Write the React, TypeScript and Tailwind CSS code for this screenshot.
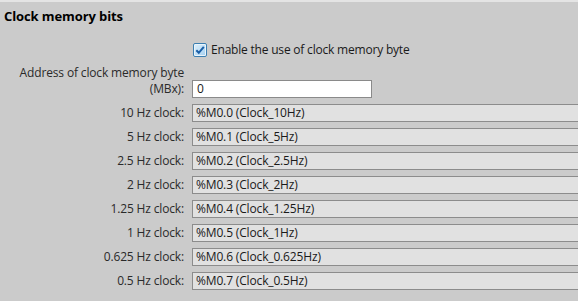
import React from "react";

const rows: [string, string][] = [
  ["10 Hz clock:", "%M0.0 (Clock_10Hz)"],
  ["5 Hz clock:", "%M0.1 (Clock_5Hz)"],
  ["2.5 Hz clock:", "%M0.2 (Clock_2.5Hz)"],
  ["2 Hz clock:", "%M0.3 (Clock_2Hz)"],
  ["1.25 Hz clock:", "%M0.4 (Clock_1.25Hz)"],
  ["1 Hz clock:", "%M0.5 (Clock_1Hz)"],
  ["0.625 Hz clock:", "%M0.6 (Clock_0.625Hz)"],
  ["0.5 Hz clock:", "%M0.7 (Clock_0.5Hz)"],
];

function CheckBox() {
  return (
    <svg width="14" height="14" viewBox="0 0 14 14" className="block">
      <defs>
        <linearGradient id="cbg" x1="0" y1="0" x2="1" y2="1">
          <stop offset="0" stopColor="#dbeefb" />
          <stop offset="1" stopColor="#a9d2f1" />
        </linearGradient>
      </defs>
      <rect x="0.5" y="0.5" width="13" height="13" rx="1.5" fill="#eaf4fb" stroke="#3c7fb1" />
      <rect x="2" y="2" width="10" height="10" fill="url(#cbg)" />
      <path d="M3.3 7.2 L5.8 9.8 L10.8 3.8" fill="none" stroke="#1a5fa8" strokeWidth="2" />
    </svg>
  );
}

export default function App() {
  return (
    <div
      className="w-[578px] h-[301px] bg-[#cbcbcb] border-t-2 border-[#e4e4e4] overflow-hidden text-[#1a1a1a]"
      style={{ fontFamily: '"Open Sans", "Noto Sans", sans-serif' }}
    >
      <div className="pl-[4px] pt-[5px] h-[24px] text-[13px] font-bold leading-[18px] text-black tracking-[-0.1px]">
        Clock memory bits
      </div>
      <div className="flex items-center h-[14px] mt-[17px] pl-[193px] gap-[4px] text-[12px] tracking-[-0.2px]">
        <CheckBox />
        <span>Enable the use of clock memory byte</span>
      </div>
      <div className="flex flex-col gap-[6px] pt-[23px] text-[12px] tracking-[-0.15px]">
        <div className="flex h-[18px]">
          <div className="w-[184px] shrink-0 text-right leading-[16px] -mt-[15px] text-[#2a2a2a]">
            <div>Address of clock memory byte</div>
            <div>(MBx):</div>
          </div>
          <div className="ml-[8px] w-[180px] h-[18px] bg-white border border-[#8a8a8a] pl-[4px] leading-[16px]">
            0
          </div>
        </div>
        {rows.map(([label, value]) => (
          <div key={label} className="flex h-[18px] items-center">
            <div className="w-[184px] shrink-0 text-right text-[#2a2a2a]">{label}</div>
            <div className="ml-[8px] flex-1 h-[18px] bg-[#e1e1e1] border border-r-0 border-[#8c8c8c] pl-[3px] leading-[16px]">
              {value}
            </div>
          </div>
        ))}
      </div>
    </div>
  );
}
